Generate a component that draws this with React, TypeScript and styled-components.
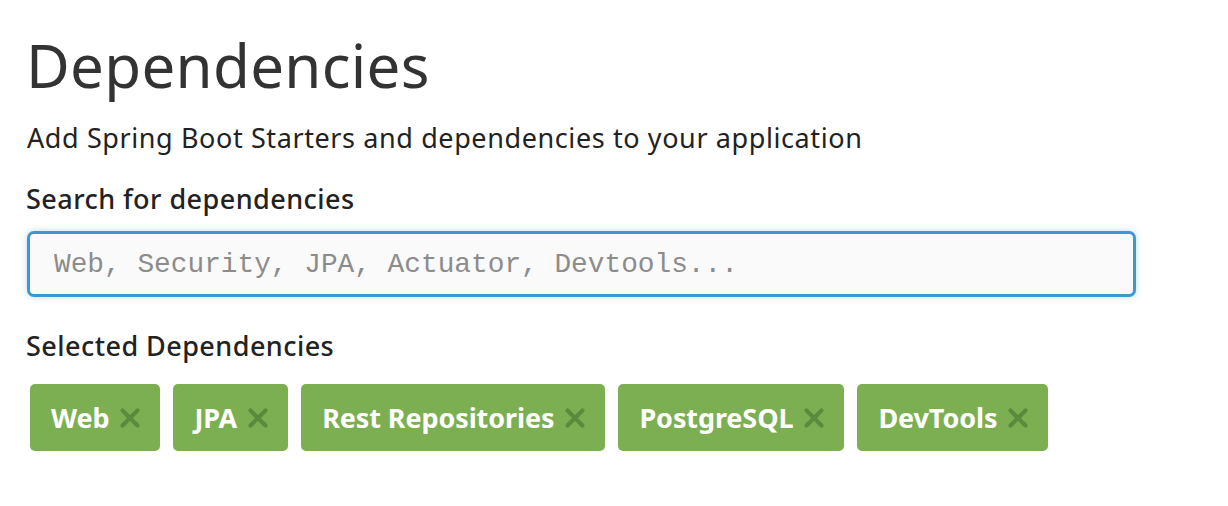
import React from "react";
import styled, { createGlobalStyle } from "styled-components";

const Global = createGlobalStyle`
  html, body { margin: 0; padding: 0; background: #ffffff; }
  body { font-family: "Noto Sans", "Open Sans", sans-serif; color: #333333; }
`;

const Page = styled.div`
  padding: 21px 0 0 26px;
  width: 1110px;
  display: flex;
  flex-direction: column;
`;

const Title = styled.h1`
  margin: 0;
  font-size: 60px;
  font-weight: 400;
  line-height: 88px;
  color: #333333;
  letter-spacing: 0.3px;
`;

const Lead = styled.p`
  margin: 13px 0 0 1px;
  font-size: 27px;
  line-height: 32px;
  letter-spacing: 0.6px;
  color: #222222;
`;

const Label = styled.label`
  margin: 29px 0 0 0;
  font-size: 27px;
  font-weight: 500;
  line-height: 32px;
  letter-spacing: 0.45px;
  color: #222222;
`;

const SearchInput = styled.input`
  margin: 16px 0 0 1px;
  height: 66px;
  box-sizing: border-box;
  width: 1109px;
  border: 3px solid #3f97cf;
  border-radius: 7px;
  background: #fafafa;
  box-shadow: 0 0 6px rgba(102, 175, 233, 0.45);
  padding: 0 0 0 24px;
  font-family: "Liberation Mono", "Courier New", monospace;
  font-size: 27.8px;
  color: #333;
  outline: none;
  &::placeholder { color: #8c8c8c; }
`;

const Section = styled.h3`
  margin: 33px 0 0 0;
  font-size: 27px;
  font-weight: 500;
  line-height: 32px;
  letter-spacing: 0.45px;
  color: #222222;
`;

const Tags = styled.div`
  display: flex;
  gap: 13px;
  margin: 22px 0 0 4px;
`;

const Tag = styled.span`
  display: inline-flex;
  align-items: center;
  height: 67px;
  box-sizing: border-box;
  padding: 0 19px 0 21px;
  background: #7caf52;
  border-radius: 5px;
  color: #ffffff;
  font-size: 27px;
  font-weight: 700;
  letter-spacing: -0.1px;
`;

const Close = styled.svg`
  width: 22px;
  height: 22px;
  margin-left: 10px;
  margin-top: 1px;
`;

const deps = ["Web", "JPA", "Rest Repositories", "PostgreSQL", "DevTools"];

export default function App() {
  return (
    <>
      <Global />
      <Page>
        <Title>Dependencies</Title>
        <Lead>Add Spring Boot Starters and dependencies to your application</Lead>
        <Label>Search for dependencies</Label>
        <SearchInput autoFocus placeholder="Web, Security, JPA, Actuator, Devtools..." />
        <Section>Selected Dependencies</Section>
        <Tags>
          {deps.map((d) => (
            <Tag key={d}>
              {d}
              <Close viewBox="0 0 22 22">
                <path d="M3.5 3.5 L18.5 18.5 M18.5 3.5 L3.5 18.5" stroke="#5a8b3c" strokeWidth="4.2" strokeLinecap="round" />
              </Close>
            </Tag>
          ))}
        </Tags>
      </Page>
    </>
  );
}
